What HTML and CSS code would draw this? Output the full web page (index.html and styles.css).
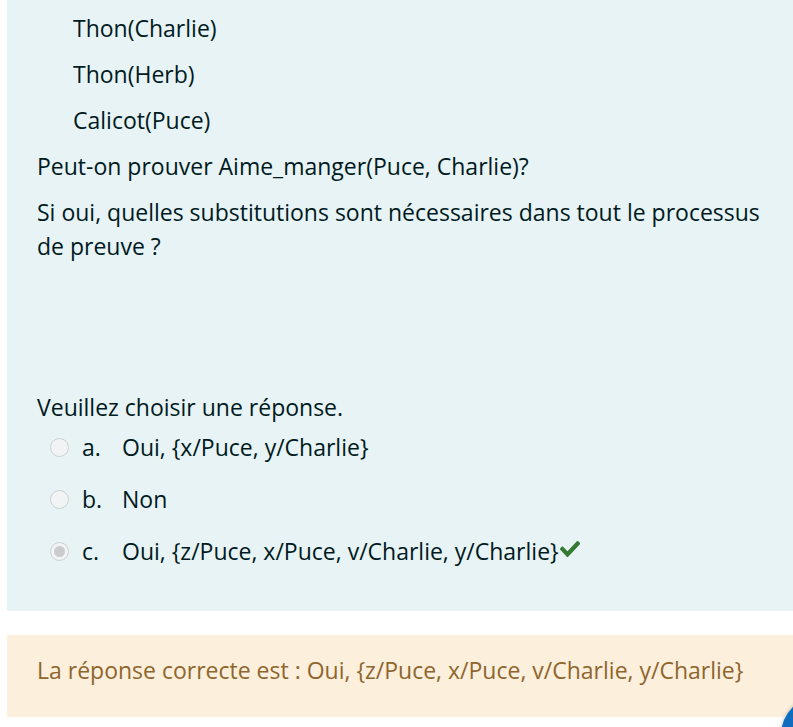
FILE: index.html
```html
<!DOCTYPE html>
<html lang="fr">
<head>
<meta charset="utf-8">
<title>Question</title>
<link rel="stylesheet" href="styles.css">
</head>
<body>
<div class="page">
  <div class="formulation">
    <div class="qtext">
      <p class="fact">Thon(Charlie)</p>
      <p class="fact">Thon(Herb)</p>
      <p class="fact">Calicot(Puce)</p>
      <p>Peut-on prouver Aime_manger(Puce, Charlie)?</p>
      <p>Si oui, quelles substitutions sont nécessaires dans tout le processus de preuve ?</p>
    </div>
    <div class="ablock">
      <div class="prompt">Veuillez choisir une réponse.</div>
      <div class="answer">
        <div class="opt">
          <span class="radio"></span>
          <span class="num">a.</span>
          <span class="txt">Oui, {x/Puce, y/Charlie}</span>
        </div>
        <div class="opt">
          <span class="radio"></span>
          <span class="num">b.</span>
          <span class="txt">Non</span>
        </div>
        <div class="opt">
          <span class="radio checked"></span>
          <span class="num">c.</span>
          <span class="txt">Oui, {z/Puce, x/Puce, v/Charlie, y/Charlie}<svg class="check" width="20" height="16" viewBox="0 64 512 384" preserveAspectRatio="none"><path fill="#357a32" d="M173.898 439.404l-166.4-166.4c-9.997-9.997-9.997-26.206 0-36.204l36.203-36.204c9.997-9.998 26.207-9.998 36.204 0L192 312.69 432.095 72.596c9.997-9.997 26.207-9.997 36.204 0l36.203 36.204c9.997 9.997 9.997 26.206 0 36.204l-294.4 294.401c-9.998 9.997-26.207 9.997-36.204-.001z"/></svg></span>
        </div>
      </div>
    </div>
  </div>
  <div class="outcome">La réponse correcte est : Oui, {z/Puce, x/Puce, v/Charlie, y/Charlie}</div>
</div>
<div class="fab"></div>
</body>
</html>
```

FILE: styles.css
```css
html, body {
  margin: 0;
  padding: 0;
  background: #ffffff;
  overflow: hidden;
}
body {
  font-family: "Open Sans", "Liberation Sans", sans-serif;
  font-size: 23px;
  color: #001a1e;
}
.page {
  padding-left: 7px;
}
.formulation {
  background: #e7f3f5;
  padding: 11px 30px 34px 30px;
}
.qtext p {
  margin: 0 0 12px 0;
  line-height: 34px;
}
.qtext p.fact {
  margin-left: 36px;
}
.ablock {
  margin-top: 130px;
}
.prompt {
  line-height: 28px;
}
.opt {
  display: flex;
  align-items: center;
  height: 52px;
  line-height: 34px;
}
.radio {
  width: 17px;
  height: 17px;
  border: 1px solid #cdd1d3;
  border-radius: 50%;
  background: #f1f3f4;
  margin-left: 13px;
  margin-right: 13px;
  box-sizing: content-box;
  position: relative;
  flex: none;
}
.radio.checked::after {
  content: "";
  position: absolute;
  left: 3px;
  top: 3px;
  width: 11px;
  height: 11px;
  border-radius: 50%;
  background: #c9cbcc;
}
.num {
  width: 40px;
  flex: none;
}
.txt {
  white-space: nowrap;
}
.check {
  vertical-align: 3px;
  margin-left: 1px;
}
.outcome {
  margin-top: 24px;
  background: #fcefdc;
  color: #8e662e;
  padding: 18px 30px 30px 30px;
  line-height: 34px;
}
.fab {
  position: fixed;
  left: 781px;
  top: 696px;
  width: 78px;
  height: 78px;
  border-radius: 50%;
  background: #0f6cbf;
  box-shadow: 0 0 4px rgba(0,0,0,0.25);
}
```
